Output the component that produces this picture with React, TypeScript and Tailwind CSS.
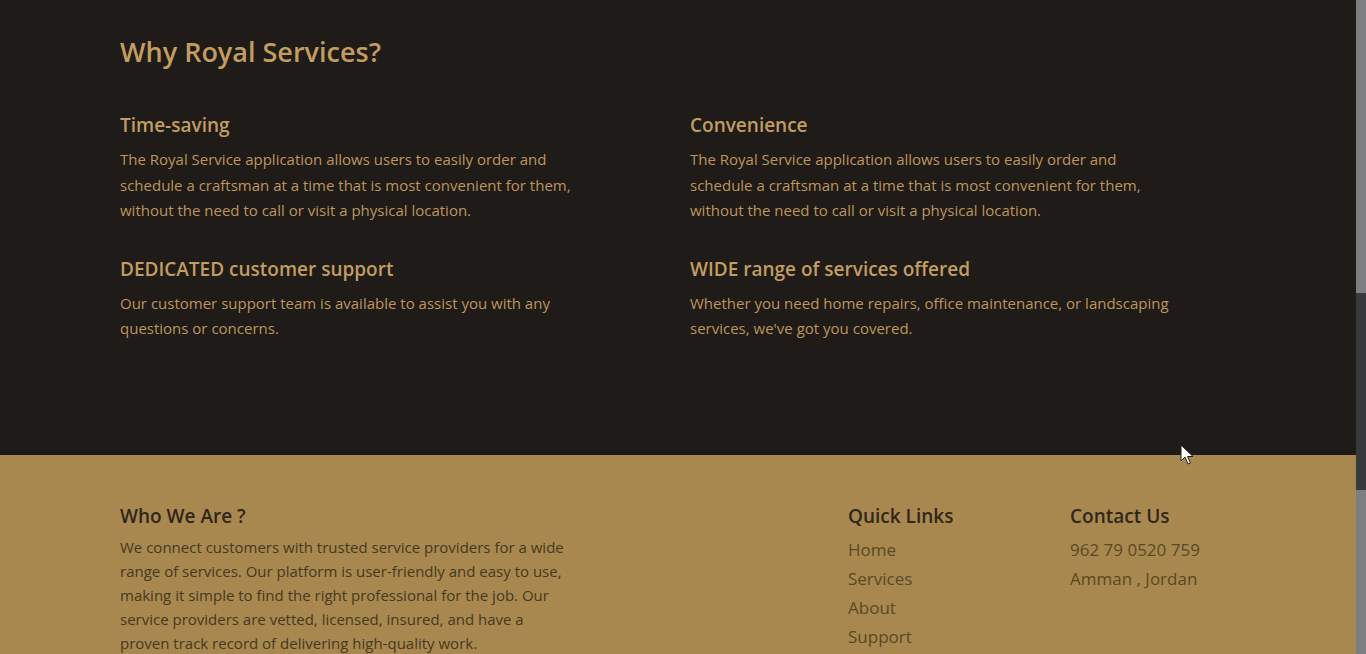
import React from 'react';

const features = [
  {
    title: 'Time-saving',
    text: 'The Royal Service application allows users to easily order and schedule a craftsman at a time that is most convenient for them, without the need to call or visit a physical location.',
  },
  {
    title: 'Convenience',
    text: 'The Royal Service application allows users to easily order and schedule a craftsman at a time that is most convenient for them, without the need to call or visit a physical location.',
  },
  {
    title: 'DEDICATED customer support',
    text: 'Our customer support team is available to assist you with any questions or concerns.',
  },
  {
    title: 'WIDE range of services offered',
    text: "Whether you need home repairs, office maintenance, or landscaping services, we've got you covered.",
  },
];

const links = ['Home', 'Services', 'About', 'Support'];

export default function App() {
  return (
    <div
      className="relative flex h-[654px] w-full overflow-hidden bg-[#1e1b18]"
      style={{ fontFamily: '"Open Sans", "Noto Sans", sans-serif' }}
    >
      <div className="flex-1">
        {/* Why section */}
        <section className="h-[455px] bg-[#1e1b18] px-[120px] pt-[32px]">
          <h2 className="text-[27px] font-semibold leading-[40px] text-[#c39d60]">Why Royal Services?</h2>
          <div className="mt-[40px] grid grid-cols-2 gap-x-[24px] gap-y-[32px]">
            {features.map((f, idx) => (
              <div key={idx} className="pr-[62px]">
                <h3 className="text-[19px] font-semibold leading-[26px] text-[#c39d60]">{f.title}</h3>
                <p className="mt-[9px] text-[15px] leading-[25.5px] text-[#bf955a]">{f.text}</p>
              </div>
            ))}
          </div>
        </section>

        {/* Footer */}
        <footer className="bg-[#a8884f] px-[120px] pt-[48px]">
          <div className="flex">
            <div className="w-[728px]">
              <h4 className="text-[19px] font-semibold leading-[26px] text-[#30271a]">Who We Are ?</h4>
              <p className="mt-[6px] w-[455px] text-[15px] leading-[24px] text-[#46391f]">
                We connect customers with trusted service providers for a wide range of services. Our platform is user-friendly and easy to use, making it simple to find the right professional for the job. Our service providers are vetted, licensed, insured, and have a proven track record of delivering high-quality work.
              </p>
            </div>
            <div className="w-[222px]">
              <h4 className="text-[19px] font-semibold leading-[26px] text-[#30271a]">Quick Links</h4>
              <ul className="mt-[6px]">
                {links.map((l) => (
                  <li key={l} className="text-[17px] leading-[29px] text-[#5a4826]">{l}</li>
                ))}
              </ul>
            </div>
            <div>
              <h4 className="text-[19px] font-semibold leading-[26px] text-[#30271a]">Contact Us</h4>
              <ul className="mt-[6px]">
                <li className="text-[17px] leading-[29px] text-[#5a4826]">962 79 0520 759</li>
                <li className="text-[17px] leading-[29px] text-[#5a4826]">Amman , Jordan</li>
              </ul>
            </div>
          </div>
        </footer>
      </div>

      {/* scrollbar */}
      <div className="flex w-[10px] flex-col bg-[#363a3a]">
        <div className="h-[293px] bg-[#7c7e80]" />
        <div className="h-[197px] bg-[#363a3a]" />
        <div className="flex-1 bg-[#7c7e80]" />
      </div>

      {/* cursor */}
      <svg className="absolute left-[1180px] top-[444px]" width="14" height="22" viewBox="0 0 14 22">
        <path d="M1 1 L1 17 L5 13 L8 20 L10.5 19 L7.5 12.5 L13 12.5 Z" fill="#fff" stroke="#222" strokeWidth="1" strokeLinejoin="round" />
      </svg>
    </div>
  );
}
